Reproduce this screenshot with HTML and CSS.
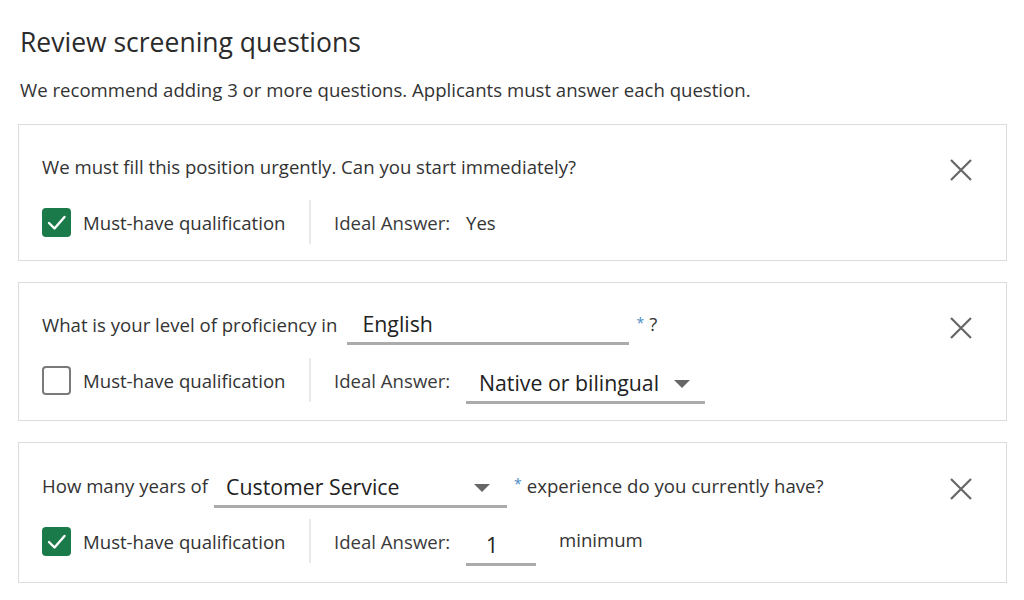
FILE: index.html
```html
<!DOCTYPE html>
<html lang="en">
<head>
<meta charset="utf-8">
<title>Review screening questions</title>
<link rel="stylesheet" href="styles.css">
</head>
<body>
<main class="page">
  <h1 class="title">Review screening questions</h1>
  <p class="subtitle">We recommend adding 3 or more questions. Applicants must answer each question.</p>

  <section class="card">
    <div class="q-row">
      <span class="q-text">We must fill this position urgently. Can you start immediately?</span>
      <button class="close" aria-label="Remove"><svg viewBox="0 0 24 24" width="24" height="24"><path d="M2 2 L22 22 M22 2 L2 22" stroke="#666" stroke-width="2.2" fill="none"/></svg></button>
    </div>
    <div class="a-row">
      <span class="check checked"><svg viewBox="0 0 29 29" width="29" height="29"><path d="M7 15 L12.5 20.5 L22.5 9" stroke="#fff" stroke-width="2.4" fill="none" stroke-linecap="round" stroke-linejoin="round"/></svg></span>
      <span class="check-label">Must-have qualification</span>
      <span class="divider"></span>
      <span class="ideal">Ideal Answer:</span>
      <span class="answer-text">Yes</span>
    </div>
  </section>

  <section class="card card-mid">
    <div class="q-row">
      <span class="q-text">What is your level of proficiency in</span>
      <span class="field field-english">English</span>
      <span class="req">*</span><span class="q-text q-after">?</span>
      <button class="close" aria-label="Remove"><svg viewBox="0 0 24 24" width="24" height="24"><path d="M2 2 L22 22 M22 2 L2 22" stroke="#666" stroke-width="2.2" fill="none"/></svg></button>
    </div>
    <div class="a-row">
      <span class="check"></span>
      <span class="check-label">Must-have qualification</span>
      <span class="divider"></span>
      <span class="ideal">Ideal Answer:</span>
      <span class="field select select-native">Native or bilingual<span class="caret"></span></span>
    </div>
  </section>

  <section class="card card-tall">
    <div class="q-row">
      <span class="q-text">How many years of</span>
      <span class="field select select-skill">Customer Service<span class="caret"></span></span>
      <span class="req">*</span><span class="q-text">experience do you currently have?</span>
      <button class="close" aria-label="Remove"><svg viewBox="0 0 24 24" width="24" height="24"><path d="M2 2 L22 22 M22 2 L2 22" stroke="#666" stroke-width="2.2" fill="none"/></svg></button>
    </div>
    <div class="a-row">
      <span class="check checked"><svg viewBox="0 0 29 29" width="29" height="29"><path d="M7 15 L12.5 20.5 L22.5 9" stroke="#fff" stroke-width="2.4" fill="none" stroke-linecap="round" stroke-linejoin="round"/></svg></span>
      <span class="check-label">Must-have qualification</span>
      <span class="divider"></span>
      <span class="ideal">Ideal Answer:</span>
      <span class="field field-num">1</span>
      <span class="unit">minimum</span>
    </div>
  </section>
</main>
</body>
</html>
```

FILE: styles.css
```css
html, body {
  margin: 0;
  padding: 0;
  background: #fff;
}
body {
  font-family: "Open Sans", "Noto Sans", "Liberation Sans", sans-serif;
  color: #333;
}
.page {
  padding: 0 17px 0 18px;
}
.title {
  margin: 26px 0 0 2px;
  font-size: 26.5px;
  line-height: 32px;
  font-weight: 400;
  color: #2b2b2b;
}
.subtitle {
  margin: 20px 0 22px 2px;
  font-size: 18.6px;
  line-height: 24px;
  color: #333;
  white-space: nowrap;
}
.card {
  width: 989px;
  border: 1px solid #dcdcdc;
  padding: 21px 0 15px 23px;
  box-sizing: border-box;
  display: flex;
  flex-direction: column;
  gap: 13px;
  margin-bottom: 21px;
}
.card-mid {
  padding-bottom: 17px;
}
.card-tall {
  padding-top: 22px;
  padding-bottom: 18px;
  margin-top: 1px;
}
.q-row {
  height: 40px;
  display: flex;
  align-items: center;
  font-size: 18.6px;
}
.q-text {
  white-space: nowrap;
}
.close {
  margin-left: auto;
  margin-right: 33px;
  margin-top: 8px;
  border: 0;
  background: none;
  padding: 0;
  width: 24px;
  height: 24px;
  display: flex;
}
.a-row {
  height: 46px;
  display: flex;
  align-items: center;
  font-size: 18.6px;
}
.check {
  width: 29px;
  height: 29px;
  box-sizing: border-box;
  border: 2px solid #7a7a7a;
  border-radius: 4px;
  display: flex;
  align-items: center;
  justify-content: center;
  flex: none;
}
.check.checked {
  border: 0;
  background: #1a7a4a;
}
.check-label {
  margin-left: 12px;
  width: 204px;
  white-space: nowrap;
}
.divider {
  width: 2px;
  height: 44px;
  background: #e8e8e8;
  margin: 0 23px 0 22px;
}
.ideal {
  width: 132px;
  white-space: nowrap;
  color: #3a3a3a;
}
.answer-text {
  color: #333;
}
.field {
  box-sizing: border-box;
  height: 41px;
  border-bottom: 3px solid #ababab;
  font-size: 21.3px;
  color: #222;
  display: flex;
  align-items: center;
  white-space: nowrap;
  padding-top: 1px;
}
.field-english {
  width: 282px;
  margin-left: 10px;
  padding-left: 15px;
}
.req {
  color: #4a8dc4;
  font-size: 14px;
  margin: 0 5px 4px 7px;
  align-self: center;
}
.q-after {
  margin-bottom: 2px;
}
.select {
  position: relative;
}
.caret {
  position: absolute;
  right: 15px;
  top: 17px;
  width: 0;
  height: 0;
  border-left: 8px solid transparent;
  border-right: 8px solid transparent;
  border-top: 8px solid #666;
}
.select-native {
  width: 239px;
  padding-left: 13px;
  margin-top: 6px;
}
.select-skill {
  width: 293px;
  margin-left: 6px;
  padding-left: 12px;
  margin-top: 4px;
}
.select-skill .caret {
  right: 17px;
}
.field-num {
  width: 70px;
  padding-left: 20px;
  margin-top: 8px;
}
.unit {
  margin-left: 23px;
  margin-bottom: 4px;
}
```
